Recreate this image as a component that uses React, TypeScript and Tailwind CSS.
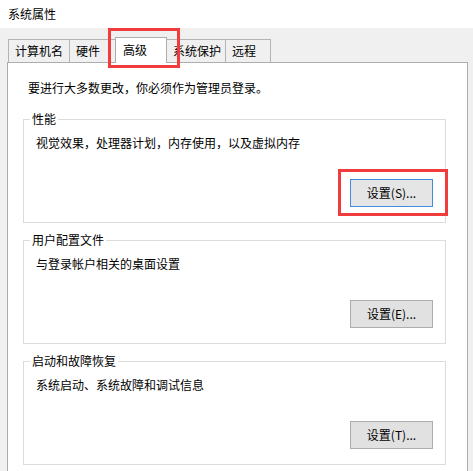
const font = { fontFamily: '"Microsoft YaHei", "Noto Sans CJK SC", sans-serif' };

function Tab({ text, active, w }: { text: string; active?: boolean; w: string }) {
  if (active) {
    return (
      <div className={"relative z-10 -mb-px -ml-px h-[26px] border border-b-0 border-[#adadad] bg-white pl-[7px] leading-[24px] " + w}>
        {text}
        <div className="absolute -left-[8px] -top-[10px] h-[40px] w-[72px] border-[3px] border-[#f03c3c]" />
      </div>
    );
  }
  return (
    <div className={"-ml-px h-[23px] border border-b-0 border-[#b4b4b4] bg-[#f0f0f0] pl-[6px] leading-[21px] first:ml-0 " + w}>
      {text}
    </div>
  );
}

function Group({ title, desc, btn, focused }: { title: string; desc: string; btn: string; focused?: boolean }) {
  return (
    <fieldset className="h-[112px] border border-[#dcdcdc] pb-[14px] pl-[6px] pr-[12px]">
      <legend className="px-[2px] leading-[16px]">{title}</legend>
      <div className="pl-[6px] pt-[8px] leading-[16px]">{desc}</div>
      <div className="mt-[28px] flex justify-end">
        <div className="relative">
          <div
            className={
              "flex h-[28px] w-[83px] items-center justify-center border " +
              (focused ? "border-[#3c8fe0] bg-[#e5e5e5]" : "border-[#adadad] bg-[#e1e1e1]")
            }
          >
            {btn}
          </div>
          {focused && (
            <div className="absolute -left-[12px] -top-[10px] h-[47px] w-[110px] border-[3px] border-[#f03c3c]" />
          )}
        </div>
      </div>
    </fieldset>
  );
}

export default function App() {
  return (
    <div className="h-[471px] w-[473px] overflow-hidden bg-[#f0f0f0] text-[12px] text-black" style={font}>
      <div className="h-[28px] bg-white pl-[8px] leading-[28px]">系统属性</div>
      <div className="flex h-[34px] items-end pl-[8px]">
        <Tab text="计算机名" w="w-[62px]" />
        <Tab text="硬件" w="w-[47px]" />
        <Tab text="高级" w="w-[52px]" active />
        <Tab text="系统保护" w="w-[60px]" />
        <Tab text="远程" w="w-[46px]" />
      </div>
      <div className="ml-[7px] h-[420px] w-[461px] border border-[#adadad] bg-white pl-[15px] pr-[21px]">
        <div className="pl-[5px] pt-[17px] leading-[16px]">要进行大多数更改，你必须作为管理员登录。</div>
        <div className="mt-[15px] flex flex-col gap-[9px]">
          <Group title="性能" desc="视觉效果，处理器计划，内存使用，以及虚拟内存" btn="设置(S)..." focused />
          <Group title="用户配置文件" desc="与登录帐户相关的桌面设置" btn="设置(E)..." />
          <Group title="启动和故障恢复" desc="系统启动、系统故障和调试信息" btn="设置(T)..." />
        </div>
      </div>
    </div>
  );
}
